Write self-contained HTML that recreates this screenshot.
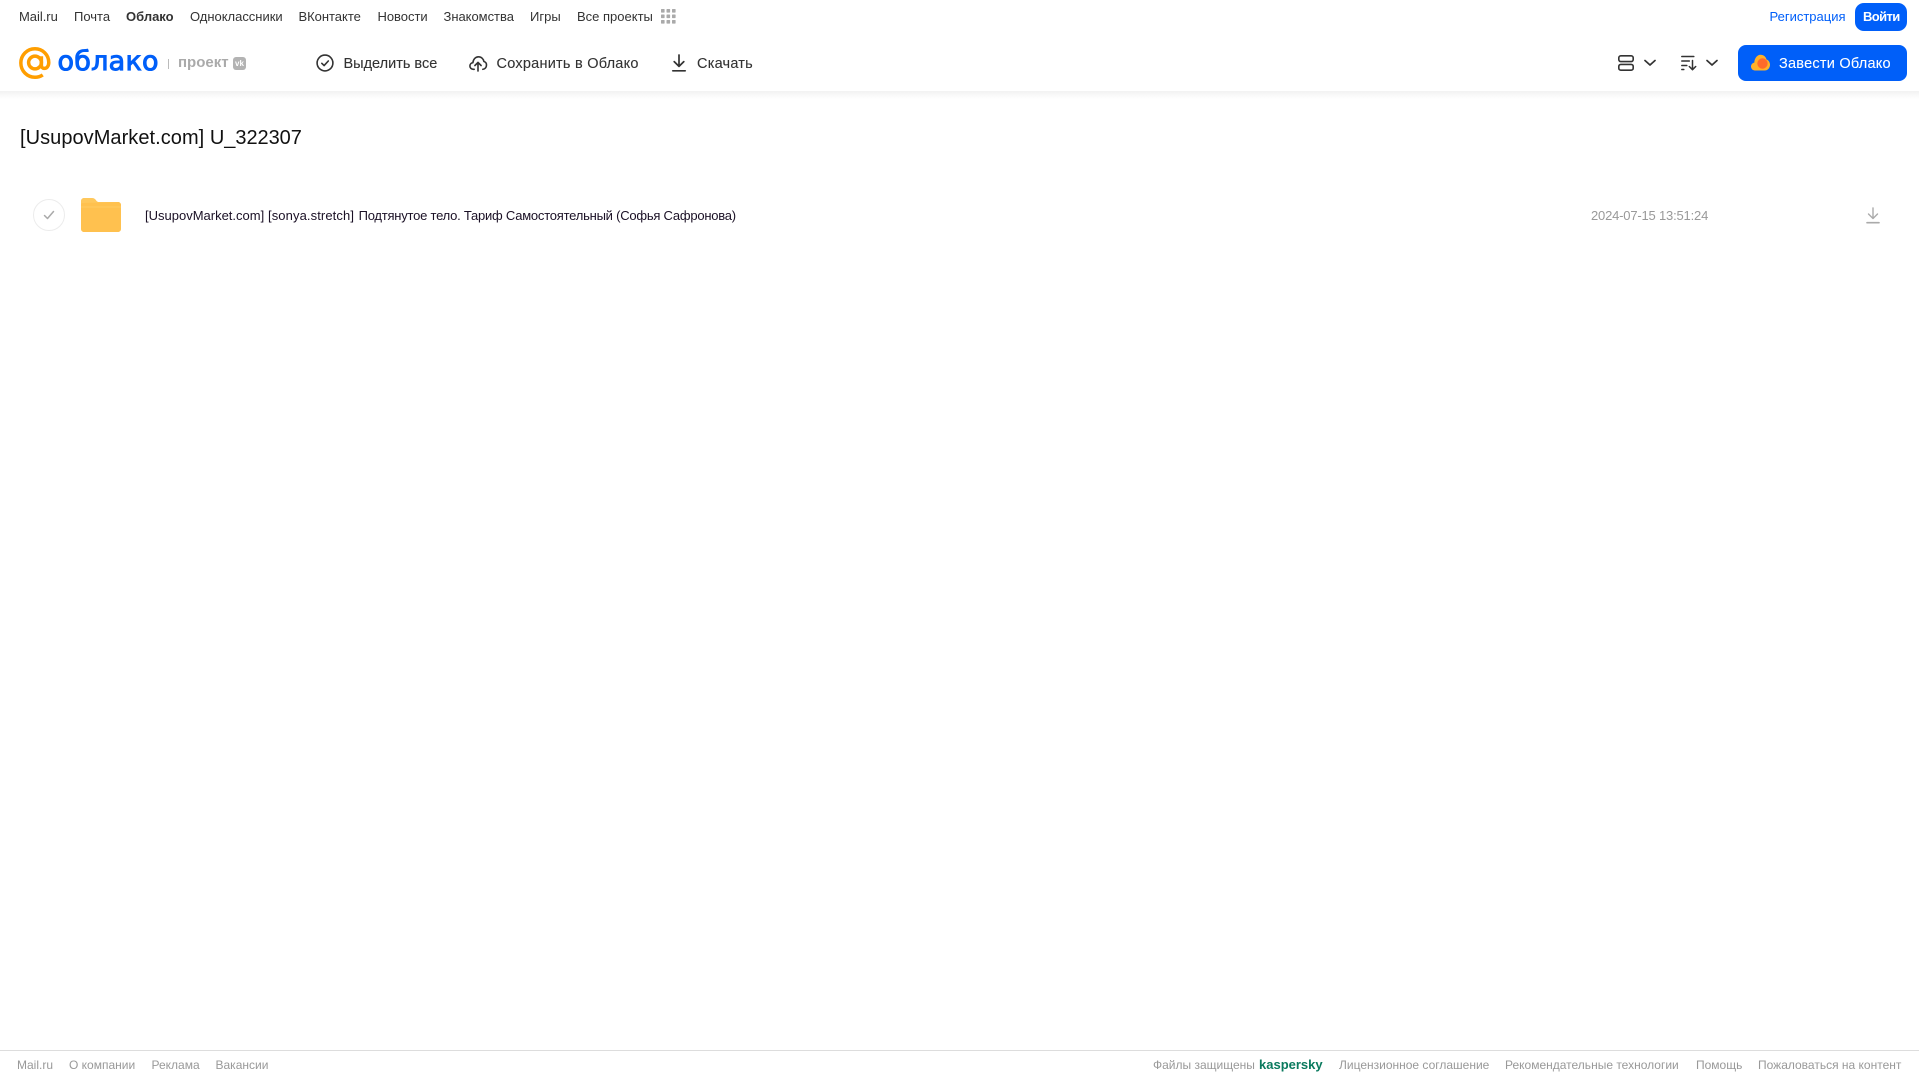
<!DOCTYPE html>
<html lang="ru"><head><meta charset="utf-8"><title>Облако</title>
<style>
html,body{margin:0;padding:0;background:#fff}
body{position:relative;width:1919px;height:1079px;overflow:hidden;font-family:"Liberation Sans",Arial,sans-serif}
.t{position:absolute;white-space:nowrap;line-height:16px}
.n{top:9px;font-size:13px;color:#333}
.b{top:56px;font-size:14.5px;color:#333;-webkit-text-stroke:.1px #333}
.f{top:1057px;font-size:12px;color:#999}
svg{position:absolute;overflow:visible}
</style></head><body>
<div style="position:absolute;left:0;top:91px;width:1919px;height:8px;background:linear-gradient(#f2f2f2,#fff)"></div>

<span class="t n" style="left:19px;letter-spacing:-.03px">Mail.ru</span>
<span class="t n" style="left:74px">Почта</span>
<span class="t n" style="left:126px;font-weight:700">Облако</span>
<span class="t n" style="left:190px;letter-spacing:-.02px">Одноклассники</span>
<span class="t n" style="left:298.500px;letter-spacing:-.03px">ВКонтакте</span>
<span class="t n" style="left:377.500px;letter-spacing:-.03px">Новости</span>
<span class="t n" style="left:443.500px;letter-spacing:-.03px">Знакомства</span>
<span class="t n" style="left:530px">Игры</span>
<span class="t n" style="left:577px">Все проекты</span>
<svg style="left:661px;top:9px" width="15" height="15" fill="#aaa"><rect x="0" y="0" width="3.6" height="3.6" rx=".6"/><rect x="5.5" y="0" width="3.6" height="3.6" rx=".6"/><rect x="11" y="0" width="3.6" height="3.6" rx=".6"/><rect x="0" y="5.5" width="3.6" height="3.6" rx=".6"/><rect x="5.5" y="5.5" width="3.6" height="3.6" rx=".6"/><rect x="11" y="5.5" width="3.6" height="3.6" rx=".6"/><rect x="0" y="11" width="3.6" height="3.6" rx=".6"/><rect x="5.5" y="11" width="3.6" height="3.6" rx=".6"/><rect x="11" y="11" width="3.6" height="3.6" rx=".6"/></svg>

<span class="t n" style="left:1769.500px;color:#005ff9">Регистрация</span>
<div style="position:absolute;left:1855px;top:3px;width:52px;height:28px;border-radius:9px;background:#005ff9"></div>
<span class="t n" style="left:1863px;color:#fff;font-weight:700;letter-spacing:-.6px">Войти</span>

<svg style="left:19px;top:47px" width="32" height="32" viewBox="0 0 33 33" fill="none" stroke="#ff9e00" stroke-width="3.6"><circle cx="16.5" cy="16" r="6.6"/><path d="M23.1 9.6v9.2c0 2 1.3 3.3 3 3.3 2.6 0 4.6-2.5 4.6-6.1C30.700 8 24.300 1.800 16.500 1.800 8.400 1.800 1.900 8.300 1.900 16.500S8.400 31.200 16.500 31.200c3 0 5.700-.8 8-2.400"/></svg>
<span class="t" style="left:57.500px;top:43px;font-size:27px;line-height:38px;color:#005ff9;font-family:'DejaVu Sans',sans-serif;letter-spacing:.25px;-webkit-text-stroke:1px #005ff9">облако</span>
<div style="position:absolute;left:168px;top:59px;width:1px;height:10px;background:#bbb"></div>
<span class="t" style="left:178px;top:55px;font-size:15px;color:#aaa;font-weight:700">проект</span>
<div style="position:absolute;left:233px;top:57px;width:13px;height:13px;border-radius:3px;background:#b3b3b3;color:#fff;font:700 8px/13px 'Liberation Sans',sans-serif;text-align:center">vk</div>

<svg style="left:316px;top:54px" width="18" height="18" viewBox="0 0 18 18" fill="none" stroke="#333" stroke-width="1.6"><circle cx="9" cy="9" r="7.9"/><path d="M5.800 9.300l2.300 2.300 4.200-4.600" stroke-linecap="round" stroke-linejoin="round"/></svg>
<span class="t b" style="left:343.500px">Выделить все</span>
<svg style="left:469px;top:54px" width="18" height="18" viewBox="0 0 18 18" fill="none" stroke="#333" stroke-width="1.6" stroke-linecap="round" stroke-linejoin="round"><path d="M5.200 15.300H4.300C2.300 15.300.9 13.800.9 12c0-1.700 1.300-3.100 3-3.300C4.200 5.400 6.400 2.800 9.500 2.800c2.800 0 5 2.100 5.400 4.700 1.600.4 2.600 1.800 2.600 3.500 0 2.300-1.600 4.300-3.700 4.300"/><path d="M9 17V8.500M5.900 11.500L9 8.400l3.100 3.100"/></svg>
<span class="t b" style="left:496.500px;letter-spacing:.24px">Сохранить в Облако</span>
<svg style="left:671px;top:54px" width="16" height="18" viewBox="0 0 16 18" fill="none" stroke="#333" stroke-width="1.7" stroke-linecap="round" stroke-linejoin="round"><path d="M8 1v11M3.200 7.600L8 12.400l4.800-4.800"/><path d="M1.800 16.800h12.400"/></svg>
<span class="t b" style="left:697px;letter-spacing:.22px">Скачать</span>

<svg style="left:1618px;top:55px" width="16" height="16" viewBox="0 0 16 16" fill="none" stroke="#333" stroke-width="1.6"><rect x=".8" y=".8" width="14.400" height="5.800" rx="2"/><rect x=".8" y="9.400" width="14.400" height="5.800" rx="2"/></svg>
<svg style="left:1644px;top:59px" width="12" height="8" viewBox="0 0 12 8" fill="none" stroke="#333" stroke-width="1.7" stroke-linecap="round" stroke-linejoin="round"><path d="M1 1.500l5 4.500 5-4.500"/></svg>
<svg style="left:1681px;top:55px" width="16" height="16" viewBox="0 0 16 16" fill="none" stroke="#333" stroke-width="1.500" stroke-linecap="round" stroke-linejoin="round"><path d="M.8 1.500h12M.8 6h7.500M.8 10.500h5M.8 14.500h2"/><path d="M11.500 5.500v9M8.300 11.500l3.200 3.200 3.200-3.200"/></svg>
<svg style="left:1706px;top:59px" width="12" height="8" viewBox="0 0 12 8" fill="none" stroke="#333" stroke-width="1.7" stroke-linecap="round" stroke-linejoin="round"><path d="M1 1.500l5 4.500 5-4.500"/></svg>

<div style="position:absolute;left:1738px;top:45px;width:169px;height:36px;border-radius:8px;background:#005ff9"></div>
<svg style="left:1751px;top:54px" width="19" height="17" viewBox="0 0 19 17"><path d="M4 16.500C1.800 16.500 0 14.700 0 12.500c0-2 1.400-3.600 3.300-3.900C3.500 4.300 6.200.8 9.500.8c3 0 5.300 1.900 6 4.700 2 .6 3.500 2.800 3.500 5.200 0 3.200-2.300 5.800-5.300 5.800z" fill="#ffb128"/><circle cx="11.500" cy="9.500" r="5.200" fill="#ff6a2a"/></svg>
<span class="t b" style="left:1779px;color:#fff;letter-spacing:.24px;-webkit-text-stroke:.1px #fff">Завести Облако</span>

<span class="t" style="left:20px;top:125px;font-size:20px;line-height:26px;color:#111"><span style="letter-spacing:.05px">[UsupovMarket.com] </span><span style="letter-spacing:-.05px">U_322307</span></span>

<div style="position:absolute;left:33px;top:199px;width:30px;height:30px;border:1px solid #ececec;border-radius:50%"></div>
<svg style="left:43px;top:210px" width="12" height="10" viewBox="0 0 12 10" fill="none" stroke="#aaa" stroke-width="1.500" stroke-linecap="round" stroke-linejoin="round"><path d="M1.500 5.500l3 3 6-7"/></svg>
<svg style="left:81px;top:198px" width="40" height="34" viewBox="0 0 40 34"><path d="M0 3C0 1.300 1.300 0 3 0h8c2 0 3 .8 4 2.200C16 3.600 16.800 4 18 4h19c1.700 0 3 1.300 3 3v5H0z" fill="#ffc85c"/><path d="M0 6.500c0-.8.700-1.500 1.500-1.500L37 4c1.700 0 3 1.300 3 3v24c0 1.700-1.300 3-3 3H3c-1.700 0-3-1.300-3-3z" fill="#ffc14f"/><path d="M0 8h40v2H0z" fill="#ffc85c" opacity=".7"/></svg>
<span class="t" style="left:145px;top:208px;font-size:13px;color:#1a1025">[UsupovMarket.com]</span>
<span class="t" style="left:268px;top:208px;font-size:13px;color:#1a1025;letter-spacing:.1px">[sonya.stretch]</span>
<span class="t" style="left:358.600px;top:208px;font-size:13px;color:#1a1025;letter-spacing:-.23px">Подтянутое тело. Тариф Самостоятельный (Софья Сафронова)</span>
<span class="t" style="left:1591px;top:208px;font-size:13px;color:#999;letter-spacing:-.19px">2024-07-15 13:51:24</span>
<svg style="left:1866px;top:207px" width="14" height="17" viewBox="0 0 14 17" fill="none" stroke="#aaa" stroke-width="1.400" stroke-linecap="round" stroke-linejoin="round"><path d="M7 1v10.500M2.500 7L7 11.500 11.500 7"/><path d="M1 15.700h12" stroke-width="1.600"/></svg>

<div style="position:absolute;left:0;top:1050px;width:1919px;height:1px;background:#ddd"></div>
<span class="t f" style="left:17px">Mail.ru</span>
<span class="t f" style="left:69px">О компании</span>
<span class="t f" style="left:151.500px">Реклама</span>
<span class="t f" style="left:215.500px">Вакансии</span>
<span class="t f" style="left:1153px">Файлы защищены</span>
<span class="t f" style="left:1259px;color:#0a7a5e;font-weight:700;font-size:13px">kaspersky</span>
<span class="t f" style="left:1339px">Лицензионное соглашение</span>
<span class="t f" style="left:1505px">Рекомендательные технологии</span>
<span class="t f" style="left:1696px">Помощь</span>
<span class="t f" style="left:1758px">Пожаловаться на контент</span>
</body></html>
